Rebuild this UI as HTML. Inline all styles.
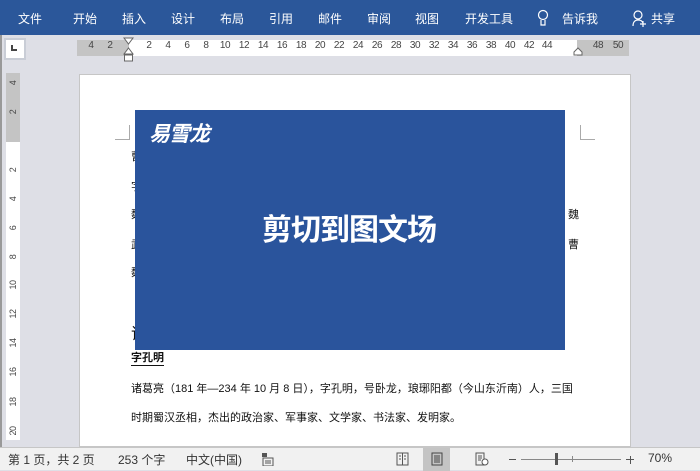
<!DOCTYPE html>
<html><head><meta charset="utf-8"><style>
*{margin:0;padding:0;box-sizing:border-box}
body{width:700px;height:470px;overflow:hidden;background:#dedfe6;font-family:"Liberation Sans","Noto Sans CJK SC",sans-serif;position:relative}
.abs{position:absolute}
.rib{left:0;top:0;width:700px;height:35px;background:#2b579a;color:#fff;font-size:12px}
.rib span{position:absolute;top:10px}
.rt{font-size:10px;color:#444;top:40px;width:16px;text-align:center;letter-spacing:-0.4px;margin-left:-8px}
.vr{font-size:9px;color:#444;left:6px;transform:rotate(-90deg);width:14px;text-align:center;letter-spacing:-0.5px}
.pg{left:79px;top:74px;width:552px;height:373px;background:#fff;border:1px solid #c6c6c6}
.t{font-size:11px;color:#111;position:absolute}
.st{left:0;top:447px;width:700px;height:23px;background:#f1f1f1;border-top:1px solid #c6c6c6;font-size:12px;color:#333}
.st span{position:absolute;top:3px}
</style></head><body>
<div class="abs rib">
<span style="left:18px">文件</span><span style="left:73px">开始</span><span style="left:122px">插入</span><span style="left:171px">设计</span><span style="left:220px">布局</span><span style="left:269px">引用</span><span style="left:318px">邮件</span><span style="left:367px">审阅</span><span style="left:415px">视图</span><span style="left:465px">开发工具</span>
<svg class="abs" style="left:537px;top:9px" width="12" height="18"><circle cx="6" cy="6" r="4.5" fill="none" stroke="#fff" stroke-width="1.2"/><path d="M4 11v5h4v-5" fill="none" stroke="#fff" stroke-width="1.2"/></svg>
<span style="left:562px">告诉我</span>
<svg class="abs" style="left:632px;top:10px" width="16" height="18"><circle cx="6" cy="5" r="4" fill="none" stroke="#fff" stroke-width="1.2"/><path d="M1 16c0-4 2-6 5-6s4 1 5 3M11 11v6M8 14h6" fill="none" stroke="#fff" stroke-width="1.2"/></svg>
<span style="left:651px">共享</span>
</div>
<div class="abs" style="left:4px;top:38px;width:22px;height:22px;background:#fff;border:2px solid #c9cdd6"></div>
<div class="abs" style="left:11px;top:45px;width:6px;height:6px;border-left:2px solid #444;border-bottom:2px solid #444"></div>
<div class="abs" style="left:77px;top:40px;width:552px;height:16px;background:#c4c4c4"></div>
<div class="abs" style="left:129px;top:40px;width:448px;height:16px;background:#fff"></div>
<span class="abs rt" style="left:91px">4</span><span class="abs rt" style="left:110px">2</span>
<span class="abs rt" style="left:149px">2</span><span class="abs rt" style="left:168px">4</span><span class="abs rt" style="left:187px">6</span><span class="abs rt" style="left:206px">8</span>
<span class="abs rt" style="left:225px">10</span><span class="abs rt" style="left:244px">12</span><span class="abs rt" style="left:263px">14</span><span class="abs rt" style="left:282px">16</span><span class="abs rt" style="left:301px">18</span><span class="abs rt" style="left:320px">20</span><span class="abs rt" style="left:339px">22</span><span class="abs rt" style="left:358px">24</span><span class="abs rt" style="left:377px">26</span><span class="abs rt" style="left:396px">28</span><span class="abs rt" style="left:415px">30</span><span class="abs rt" style="left:434px">32</span><span class="abs rt" style="left:453px">34</span><span class="abs rt" style="left:472px">36</span><span class="abs rt" style="left:491px">38</span><span class="abs rt" style="left:510px">40</span><span class="abs rt" style="left:529px">42</span><span class="abs rt" style="left:547px">44</span>
<span class="abs rt" style="left:598px">48</span><span class="abs rt" style="left:618px">50</span>
<svg class="abs" style="left:123px;top:37px" width="12" height="25"><path d="M1 1h9l-4.5 6z M1 17h9l-4.5-6z" fill="#fff" stroke="#666"/><rect x="1.5" y="18" width="8" height="6" fill="#fff" stroke="#666"/></svg>
<svg class="abs" style="left:573px;top:47px" width="10" height="9"><path d="M1 8h8V5L5 1 1 5z" fill="#fff" stroke="#666"/></svg>
<div class="abs" style="left:6px;top:73px;width:14px;height:367px;background:#fff"></div>
<div class="abs" style="left:6px;top:73px;width:14px;height:69px;background:#c4c4c4"></div>
<div class="abs vr" style="top:78px">4</div><div class="abs vr" style="top:107px">2</div>
<div class="abs vr" style="top:165px">2</div><div class="abs vr" style="top:194px">4</div><div class="abs vr" style="top:223px">6</div><div class="abs vr" style="top:252px">8</div><div class="abs vr" style="top:280px">10</div><div class="abs vr" style="top:309px">12</div><div class="abs vr" style="top:338px">14</div><div class="abs vr" style="top:367px">16</div><div class="abs vr" style="top:397px">18</div><div class="abs vr" style="top:426px">20</div>
<div class="abs" style="left:0;top:35px;width:2px;height:412px;background:#999"></div>
<div class="abs pg"></div>
<div class="abs" style="left:115px;top:125px;width:15px;height:15px;border-right:1px solid #aaa;border-bottom:1px solid #aaa"></div>
<div class="abs" style="left:580px;top:125px;width:15px;height:15px;border-left:1px solid #aaa;border-bottom:1px solid #aaa"></div>
<span class="t" style="left:131px;top:148px">曹</span><span class="t" style="left:131px;top:178px">字</span><span class="t" style="left:131px;top:206px">魏</span><span class="t" style="left:131px;top:236px">武</span><span class="t" style="left:131px;top:264px">魏</span>
<span class="t" style="left:568px;top:206px">魏</span><span class="t" style="left:568px;top:236px">曹</span>
<span class="t" style="left:131px;top:320px;font-size:16px">诸</span>
<div class="abs" style="left:135px;top:110px;width:430px;height:240px;background:#2a549c"></div>
<span class="abs" style="left:149px;top:123px;color:#fff;font-size:21px;font-weight:bold;font-style:italic;letter-spacing:-1px;line-height:24px">易雪龙</span>
<span class="abs" style="left:262px;top:214px;color:#fff;font-size:30px;font-weight:bold;letter-spacing:-1px;line-height:34px">剪切到图文场</span>
<span class="t" style="left:131px;top:351px;font-weight:bold;border-bottom:1px solid #111;line-height:14px">字孔明</span>
<span class="t" style="left:131px;top:380px">诸葛亮（181 年—234 年 10 月 8 日），字孔明，号卧龙，琅琊阳都（今山东沂南）人，三国</span>
<span class="t" style="left:131px;top:409px">时期蜀汉丞相，杰出的政治家、军事家、文学家、书法家、发明家。</span>
<div class="abs st">
<span style="left:8px">第 1 页，共 2 页</span><span style="left:118px">253 个字</span><span style="left:186px">中文(中国)</span>
<svg class="abs" style="left:262px;top:5px" width="12" height="13"><rect x="0" y="0" width="5" height="4" fill="#555"/><rect x="1" y="5" width="10" height="8" fill="none" stroke="#555"/><path d="M3 8h6M3 10h6" stroke="#555"/></svg>
<svg class="abs" style="left:396px;top:4px" width="13" height="14"><path d="M1 1h11v12H1zM6.5 1v12M3 4h2M3 7h2M8 4h2M8 7h2" fill="none" stroke="#555"/></svg>
<div class="abs" style="left:423px;top:0;width:27px;height:23px;background:#c4c4c4"></div>
<svg class="abs" style="left:431px;top:4px" width="12" height="14"><path d="M1 1h10v12H1zM3 4h6M3 6h6M3 8h6M3 10h6" fill="none" stroke="#444"/></svg>
<svg class="abs" style="left:475px;top:4px" width="14" height="14"><path d="M1 1h8v12H1zM3 4h4M3 6h4M3 8h3" fill="none" stroke="#555"/><circle cx="10" cy="10" r="3" fill="#fff" stroke="#555"/></svg>
<div class="abs" style="left:509px;top:11px;width:7px;height:1px;background:#555"></div>
<div class="abs" style="left:521px;top:11px;width:100px;height:1px;background:#888"></div>
<div class="abs" style="left:555px;top:5px;width:3px;height:12px;background:#555"></div>
<div class="abs" style="left:572px;top:8px;width:1px;height:6px;background:#888"></div>
<div class="abs" style="left:626px;top:11px;width:8px;height:1px;background:#555"></div>
<div class="abs" style="left:629.5px;top:7.5px;width:1px;height:8px;background:#555"></div>
<span style="left:648px">70%</span>
</div>
</body></html>
